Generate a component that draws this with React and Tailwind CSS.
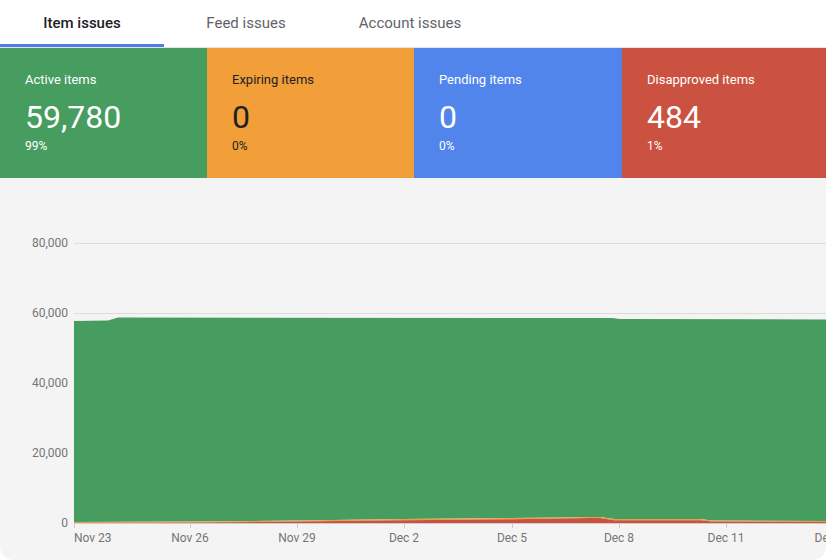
import React from "react";

const cards = [
  { label: "Active items", value: "59,780", pct: "99%", bg: "bg-[#479c5f]", text: "text-white" },
  { label: "Expiring items", value: "0", pct: "0%", bg: "bg-[#f29e39]", text: "text-[#202124]" },
  { label: "Pending items", value: "0", pct: "0%", bg: "bg-[#5285ec]", text: "text-white" },
  { label: "Disapproved items", value: "484", pct: "1%", bg: "bg-[#cb5241]", text: "text-white" },
];

const OFF = 178;
const red = [
  [74, 523], [190, 522.6], [297, 521.6], [404, 520.2], [512, 519.2], [560, 518.6],
  [590, 518], [600, 518], [614, 520.2], [700, 520.2], [712, 521.6], [826, 522],
];
const green = [
  [74, 321], [108, 320.5], [118, 317.6], [612, 318], [620, 319], [826, 319.4],
];

function pts(arr, dy = 0) {
  return arr.map(([x, y]) => `${x},${y - OFF + dy}`).join(" ");
}

function Chart() {
  const base = 523 - OFF;
  const greenPoly = pts(green) + " " + pts([...red].reverse(), -1.1);
  const orangePoly = pts(red, -1.1) + " " + pts([...red].reverse());
  const redPoly = pts(red) + ` 826,${base} 74,${base}`;
  const yLabels = [
    ["80,000", 243],
    ["60,000", 313],
    ["40,000", 383],
    ["20,000", 453],
    ["0", 523],
  ];
  const xLabels = [
    ["Nov 23", 74, "start"],
    ["Nov 26", 190, "middle"],
    ["Nov 29", 297, "middle"],
    ["Dec 2", 404, "middle"],
    ["Dec 5", 512, "middle"],
    ["Dec 8", 619, "middle"],
    ["Dec 11", 726, "middle"],
    ["Dec 14", 833, "middle"],
  ];
  return (
    <svg width="826" height="382" viewBox="0 0 826 382" className="block">
      {yLabels.map(([t, y]) => (
        <g key={t}>
          <line x1="74" x2="826" y1={y - OFF + 0.5} y2={y - OFF + 0.5} stroke="#dcdcdc" strokeWidth="1" />
          <text x="68" y={y - OFF + 4} textAnchor="end" fontSize="12" fill="#757575" fontFamily="Roboto, sans-serif">
            {t}
          </text>
        </g>
      ))}
      <polygon points={greenPoly} fill="#479c5f" />
      <polygon points={orangePoly} fill="#e9a040" />
      <polygon points={redPoly} fill="#cb5241" />
      <line x1="74" x2="826" y1={base + 0.5} y2={base + 0.5} stroke="#cccccc" strokeWidth="1" />
      {xLabels.map(([t, x, a]) => (
        <g key={t}>
          <line x1={x + 0.5} x2={x + 0.5} y1={base} y2={base + 5} stroke="#cccccc" strokeWidth="1" />
          <text x={x} y={base + 19} textAnchor={a} fontSize="12" fill="#757575" fontFamily="Roboto, sans-serif">
            {t}
          </text>
        </g>
      ))}
    </svg>
  );
}

export default function App() {
  return (
    <div className="w-[826px] h-[560px] bg-white overflow-hidden font-['Roboto',sans-serif]">
      <div className="flex h-[48px] border-b border-[#e3e3e3]">
        {["Item issues", "Feed issues", "Account issues"].map((t, i) => (
          <div
            key={t}
            className={
              i === 0
                ? "w-[164px] flex items-center justify-center text-[15px] font-medium text-[#202124] border-b-[3px] border-[#4a7fe8] pt-[3px]"
                : "w-[164px] flex items-center justify-center text-[15px] text-[#5f6368]"
            }
          >
            {t}
          </div>
        ))}
      </div>
      <div className="grid grid-cols-[207px_207px_208px_1fr] h-[130px]">
        {cards.map((c) => (
          <div key={c.label} className={`${c.bg} ${c.text} pl-[25px] pt-[24px]`}>
            <div className="text-[13px] leading-[16px]">{c.label}</div>
            <div className="text-[32px] leading-[36px] mt-[11px]">{c.value}</div>
            <div className="text-[12px] leading-[14px] mt-[4px]">{c.pct}</div>
          </div>
        ))}
      </div>
      <div className="bg-[#f4f4f4] h-[382px] rounded-b-[14px] overflow-hidden">
        <Chart />
      </div>
    </div>
  );
}
